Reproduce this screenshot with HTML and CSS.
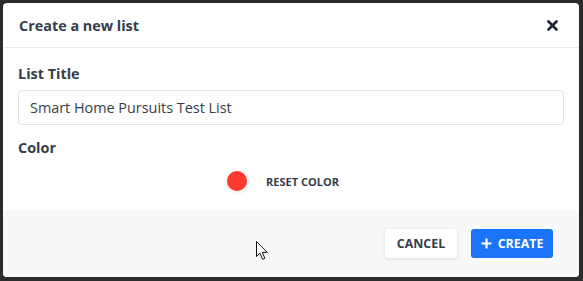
FILE: index.html
```html
<!DOCTYPE html>
<html lang="en">

<head>
  <meta charset="UTF-8" />
  <meta name="viewport" content="width=device-width, initial-scale=1.0" />
  <title>Create a new list</title>
  <link rel="stylesheet" href="styles.css">
</head>

<body>
  <div class="modal">
    <div class="modal-header">
      <h3>Create a new list</h3>
      <button class="close-btn" aria-label="Close">
        <svg width="11" height="11" viewBox="0 0 11 11">
          <path d="M1.5 1.5 L9.5 9.5 M9.5 1.5 L1.5 9.5" stroke="#1f2633" stroke-width="2.6" stroke-linecap="round" />
        </svg>
      </button>
    </div>

    <div class="modal-body">
      <label class="field-label" for="list-title">List Title</label>
      <input class="text-input" id="list-title" type="text" value="Smart Home Pursuits Test List">

      <div class="field-label color-label">Color</div>
      <div class="color-row">
        <span class="color-dot"></span>
        <button class="reset-btn">Reset color</button>
      </div>
    </div>

    <div class="modal-footer">
      <button class="btn btn-cancel">Cancel</button>
      <button class="btn btn-create">
        <svg width="11" height="11" viewBox="0 0 11 11">
          <path d="M5.5 0.5 V10.5 M0.5 5.5 H10.5" stroke="#fff" stroke-width="2.2" />
        </svg>
        Create
      </button>
    </div>

    <!-- mouse pointer from the screenshot -->
    <svg class="cursor" width="13" height="20" viewBox="0 0 13 20">
      <path d="M0.5 0.5 L0.5 15.5 L4 12.2 L6.6 18.3 L8.8 17.3 L6.3 11.4 L11.2 11.4 Z" fill="#fff" stroke="#111" stroke-width="1" stroke-linejoin="round" />
    </svg>
  </div>
</body>

</html>
```

FILE: styles.css
```css
body {
  margin: 0;
  background: #2b2b2b;
  font-family: 'Open Sans', 'Noto Sans', sans-serif;
  color: #363d4a;
  height: 281px;
  overflow: hidden;
}

.modal {
  position: relative;
  margin: 3px 4px 0 3px;
  height: 274px;
  background-color: #fff;
  border-radius: 4px;
  overflow: hidden;
  display: flex;
  flex-direction: column;
}

.modal-header {
  height: 44px;
  padding: 0 21px 0 16px;
  border-bottom: 1px solid #ececec;
  display: flex;
  align-items: center;
  justify-content: space-between;
}

.modal-header h3 {
  margin: 0;
  font-size: 14.4px;
  font-weight: 700;
}

.close-btn {
  border: none;
  background: none;
  padding: 0;
  display: flex;
  margin-top: 1px;
}

.modal-body {
  padding: 16px 15px 16px 15px;
  display: flex;
  flex-direction: column;
}

.field-label {
  font-size: 14.4px;
  font-weight: 700;
  line-height: 20px;
  margin-bottom: 6px;
}

.text-input {
  height: 35px;
  box-sizing: border-box;
  border: 1px solid #e3e3e3;
  border-radius: 4px;
  padding: 0 11px;
  font-family: inherit;
  font-size: 14.4px;
  color: #363d4a;
  outline: none;
}

.color-label {
  margin-top: 13px;
  margin-bottom: 10px;
}

.color-row {
  height: 26px;
  display: flex;
  align-items: center;
  justify-content: center;
  gap: 3px;
}

.color-dot {
  width: 20px;
  height: 20px;
  border-radius: 50%;
  background: #ff3b30;
  box-shadow: 0 1px 4px rgba(0, 0, 0, 0.15);
}

.reset-btn {
  border: none;
  background: none;
  font-family: inherit;
  font-size: 11px;
  font-weight: 700;
  text-transform: uppercase;
  color: #363d4a;
  padding: 0 16px;
  height: 26px;
}

.modal-footer {
  flex: 1;
  background: #f7f8fa;
  display: flex;
  align-items: center;
  justify-content: flex-end;
  gap: 14px;
  padding: 0 26px 0 0;
}

.btn {
  height: 29px;
  border: none;
  border-radius: 3px;
  font-family: inherit;
  font-size: 12.4px;
  font-weight: 700;
  text-transform: uppercase;
  display: flex;
  align-items: center;
  gap: 6px;
}

.btn-cancel {
  width: 72px;
  justify-content: center;
  background: #fff;
  color: #363d4a;
  box-shadow: 0 1px 4px rgba(0, 0, 0, 0.12);
}

.btn-create {
  width: 82px;
  justify-content: center;
  background: #1b73f7;
  color: #fff;
}

.cursor {
  position: absolute;
  left: 253px;
  top: 238px;
}
```
